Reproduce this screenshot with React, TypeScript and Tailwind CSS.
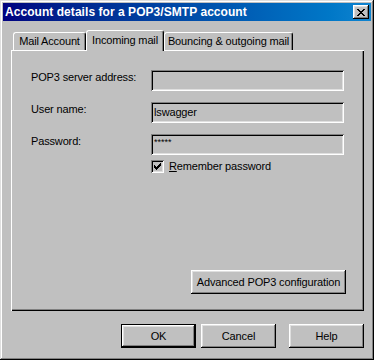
import React from "react";

const raised =
  "shadow-[inset_-1px_-1px_#000,inset_1px_1px_#fff,inset_-2px_-2px_#808080,inset_2px_2px_#dfdfdf]";
const sunken =
  "shadow-[inset_1px_1px_#808080,inset_-1px_-1px_#fff,inset_2px_2px_#000,inset_-2px_-2px_#dfdfdf]";

function Field({ children }: { children?: React.ReactNode }) {
  return (
    <div className={`w-[193px] h-[21px] bg-[#c0c0c0] ${sunken} pl-[3px] flex items-center leading-[13px]`}>
      {children}
    </div>
  );
}

function Btn({ children, def, w }: { children: React.ReactNode; def?: boolean; w: string }) {
  if (def) {
    return (
      <div className={`${w} h-[24px] border border-black`}>
        <div className={`w-full h-full ${raised} flex items-center justify-center`}>{children}</div>
      </div>
    );
  }
  return <div className={`${w} h-[24px] ${raised} flex items-center justify-center`}>{children}</div>;
}

export default function App() {
  return (
    <div
      className="w-[374px] h-[360px] bg-[#c0c0c0] p-[3px] shadow-[inset_-1px_-1px_#000,inset_1px_1px_#dfdfdf,inset_-2px_-2px_#808080,inset_2px_2px_#fff] text-black text-[11px] leading-[13px]"
      style={{ fontFamily: '"Liberation Sans", Arial, sans-serif' }}
    >
      {/* Title bar */}
      <div className="h-[18px] flex items-center justify-between bg-gradient-to-r from-[#000080] to-[#1084d0] pl-[2px] pr-[2px]">
        <span className="text-white font-bold text-[12px] leading-[14px] tracking-[0.05px]">
          Account details for a POP3/SMTP account
        </span>
        <div className={`w-[16px] h-[14px] bg-[#c0c0c0] ${raised} flex items-center justify-center`}>
          <svg width="8" height="7" viewBox="0 0 8 7" shapeRendering="crispEdges">
            <path
              fill="#000"
              d="M0 0h2v1H0zM6 0h2v1H6zM1 1h2v1H1zM5 1h2v1H5zM2 2h4v1H2zM3 3h2v1H3zM2 4h4v1H2zM1 5h2v1H1zM5 5h2v1H5zM0 6h2v1H0zM6 6h2v1H6z"
            />
          </svg>
        </div>
      </div>

      {/* Body */}
      <div className="pl-[8px] pt-[9px] tracking-[-0.15px]">
        {/* Tabs */}
        <div className="flex items-end h-[21px] ml-[2px] mb-[-1px] relative z-10">
          <div className="w-[73px] h-[18px] mb-[1px] border-t border-l border-white border-r border-r-black rounded-t-[3px] shadow-[inset_-1px_0_#808080] flex items-center justify-center">
            Mail Account
          </div>
          <div className="w-[78px] h-[21px] bg-[#c0c0c0] border-t border-l border-white border-r border-r-black rounded-t-[3px] shadow-[inset_-1px_0_#808080] flex items-start justify-center pt-[3px]">
            Incoming mail
          </div>
          <div className="w-[129px] h-[18px] mb-[1px] border-t border-l border-white border-r border-r-black rounded-t-[3px] shadow-[inset_-1px_0_#808080] flex items-center justify-center">
            Bouncing &amp; outgoing mail
          </div>
        </div>

        {/* Panel */}
        <div className="w-[353px] h-[261px] shadow-[inset_1px_1px_#fff,inset_-1px_-1px_#000,inset_-2px_-2px_#808080] flex flex-col pt-[20px] pl-[20px] pr-[18px] pb-[17px]">
          <div className="flex items-start h-[21px] mb-[11px]">
            <div className="w-[120px] pt-[1px]">POP3 server address:</div>
            <Field />
          </div>
          <div className="flex items-start h-[21px] mb-[11px]">
            <div className="w-[120px] pt-[1px]">User name:</div>
            <Field>lswagger</Field>
          </div>
          <div className="flex items-start h-[21px]">
            <div className="w-[120px] pt-[1px]">Password:</div>
            <Field>
              <span className="self-start pt-[4px] text-[9px] leading-[9px] tracking-[0px]">*****</span>
            </Field>
          </div>
          <div className="flex items-center h-[13px] mt-[5px] ml-[120px]">
            <div className={`w-[13px] h-[13px] ${sunken} bg-[#c0c0c0] flex items-center justify-center`}>
              <svg width="7" height="7" viewBox="0 0 7 7" shapeRendering="crispEdges">
                <path
                  fill="#000"
                  d="M6 0h1v1H6zM5 1h2v1H5zM0 2h1v1H0zM4 2h3v1H4zM0 3h2v1H0zM3 3h3v1H3zM0 4h5v1H0zM1 5h3v1H1zM2 6h1v1H2z"
                />
              </svg>
            </div>
            <span className="ml-[5px]">
              <span className="underline">R</span>emember password
            </span>
          </div>
          <div className="flex-1" />
          <div className="self-end">
            <Btn w="w-[155px]">Advanced POP3 configuration</Btn>
          </div>
        </div>

        {/* Bottom buttons */}
        <div className="w-[353px] flex justify-end mt-[13px]">
          <Btn def w="w-[75px]">OK</Btn>
          <div className="ml-[5px]">
            <Btn w="w-[75px]">Cancel</Btn>
          </div>
          <div className="ml-[13px]">
            <Btn w="w-[75px]">Help</Btn>
          </div>
        </div>
      </div>
    </div>
  );
}
